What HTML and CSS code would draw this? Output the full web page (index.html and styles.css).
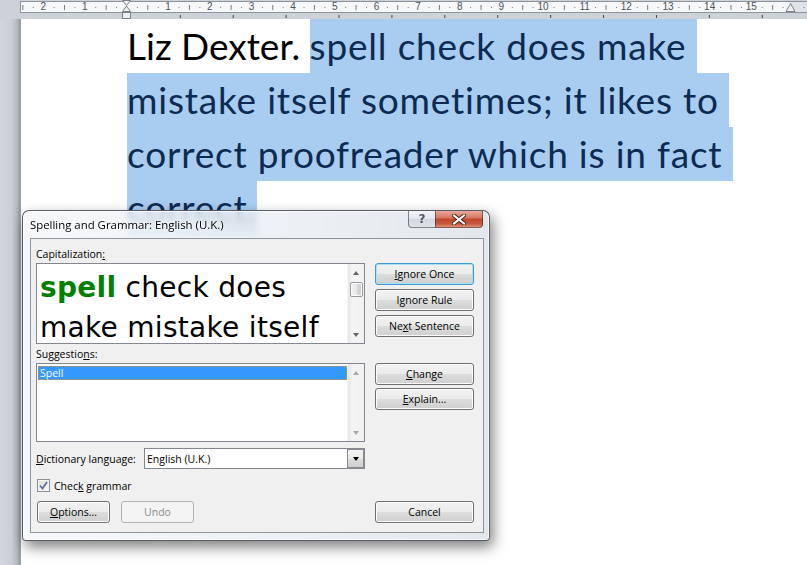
FILE: index.html
```html
<!DOCTYPE html>
<html lang="en">
<head>
  <meta charset="UTF-8" />
  <meta name="viewport" content="width=device-width, initial-scale=1.0"/>
  <title>Spelling and Grammar</title>
  <link rel="stylesheet" href="styles.css">
</head>
<body>
  <div class="ruler-row">
    <div class="ruler">
      <div class="ruler-nums">
        <span>2</span><span>1</span><span></span><span>1</span><span>2</span><span>3</span><span>4</span><span>5</span><span>6</span><span>7</span><span>8</span><span>9</span><span>10</span><span>11</span><span>12</span><span>13</span><span>14</span><span>15</span>
      </div>
    </div>
    <div class="tabstops"></div>
    <svg class="indent-marker" width="11" height="19" viewBox="0 0 11 19">
      <polygon points="1.5,0.5 9.5,0.5 5.5,5.5" />
      <polygon points="5.5,6 9.5,11.5 1.5,11.5" />
      <rect x="1.5" y="12.5" width="8" height="6" />
    </svg>
    <svg class="right-marker" width="11" height="10" viewBox="0 0 11 10">
      <polygon points="5.5,0.5 10,8.5 1,8.5" />
    </svg>
  </div>

  <div class="workspace">
    <div class="gutter"></div>
    <div class="page">
      <div class="doc">
        <div class="line">Liz Dexter. <span class="sel">spell check does make </span></div>
        <div class="line"><span class="sel">mistake itself sometimes; it likes to </span></div>
        <div class="line"><span class="sel">correct proofreader which is in fact </span></div>
        <div class="line"><span class="sel">correct.</span></div>
      </div>
    </div>
  </div>

  <!-- the dialog floats over the document -->
  <div class="dialog">
    <div class="titlebar">
      <div class="title">Spelling and Grammar: English (U.K.)</div>
      <div class="caption-btns">
        <div class="cap help">?</div>
        <div class="cap close">
          <svg width="14" height="11" viewBox="0 0 14 11">
            <path d="M2 1.5 L12 9.5 M12 1.5 L2 9.5" stroke="#4a2019" stroke-width="4" stroke-linecap="square" />
            <path d="M2 1.5 L12 9.5 M12 1.5 L2 9.5" stroke="#fff" stroke-width="2" stroke-linecap="square" />
          </svg>
        </div>
      </div>
    </div>

    <div class="client">
      <div class="label cap-label">Capitalization<u>:</u></div>
      <div class="pane-row">
        <div class="textbox">
          <div class="sentence"><b class="err">spell</b> check does<br>make mistake itself</div>
          <div class="vscroll">
            <span class="arrow up"></span>
            <span class="thumb"></span>
            <span class="arrow down"></span>
          </div>
        </div>
        <div class="btn-col">
          <button class="btn default"><u>I</u>gnore Once</button>
          <button class="btn">I<u>g</u>nore Rule</button>
          <button class="btn">Ne<u>x</u>t Sentence</button>
        </div>
      </div>

      <div class="label sugg-label">Suggestio<u>n</u>s:</div>
      <div class="pane-row">
        <div class="listbox">
          <div class="items">
            <div class="item selected">Spell</div>
          </div>
          <div class="vscroll off">
            <span class="arrow up"></span>
            <span class="arrow down"></span>
          </div>
        </div>
        <div class="btn-col tight">
          <button class="btn"><u>C</u>hange</button>
          <button class="btn"><u>E</u>xplain...</button>
        </div>
      </div>

      <div class="lang-row">
        <span class="lang-label"><u>D</u>ictionary language:</span>
        <div class="combo">
          <span class="combo-text">English (U.K.)</span>
          <span class="combo-btn"><span class="caret"></span></span>
        </div>
      </div>

      <div class="check-row">
        <span class="checkbox">
          <svg width="9" height="9" viewBox="0 0 9 9">
            <path d="M1 4.5 L3.5 7.5 L8 1" fill="none" stroke="#5a70a6" stroke-width="1.8" />
          </svg>
        </span>
        <span>Chec<u>k</u> grammar</span>
      </div>

      <div class="bottom-row">
        <button class="btn small"><u>O</u>ptions...</button>
        <button class="btn small" disabled>Undo</button>
        <button class="btn cancel">Cancel</button>
      </div>
    </div>
  </div>
</body>
</html>
```

FILE: styles.css
```css
body {
  margin: 0;
  width: 807px;
  height: 565px;
  overflow: hidden;
  position: relative;
  background: #cdd2d9;
  font-family: "Open Sans", "Noto Sans", sans-serif;
}

/* ---------- ruler ---------- */
.ruler-row {
  height: 19px;
  position: relative;
  background: #cdd2d9;
}

.ruler {
  margin-left: 20px;
  position: relative;
  top: 1px;
  height: 10px;
  border: 1px solid #8e949b;
  border-right: none;
  background-color: #f6f7f9;
  background-image:
    linear-gradient(to right, #75797f 0 1px, transparent 1px),
    linear-gradient(to right, #75797f 0 1px, transparent 1px),
    linear-gradient(to right, transparent 769px, #dfe2e6 769px);
  background-size: 41.667px 5px, 20.833px 1px, 100% 100%;
  background-position: 1.33px 2.5px, 11.77px 4.5px, 0 0;
  background-repeat: repeat-x, repeat-x, no-repeat;
}

.ruler-nums {
  display: flex;
  padding-left: 1.33px;
}

.ruler-nums span {
  flex: 0 0 41.667px;
  text-align: center;
  font-family: "Liberation Sans", sans-serif;
  font-size: 10px;
  line-height: 10px;
  color: #4f545b;
}

.tabstops {
  position: relative;
  top: 1px;
  margin-left: 128px;
  height: 7px;
  background-image: linear-gradient(to right, #3f4348 0 1px, transparent 1px);
  background-size: 52.92px 3px;
  background-position: 51.8px 2px;
  background-repeat: repeat-x;
}

.indent-marker {
  position: absolute;
  left: 121px;
  top: 0;
}

.right-marker {
  position: absolute;
  left: 785px;
  top: 3px;
}

.indent-marker polygon,
.indent-marker rect,
.right-marker polygon {
  fill: #eef0f2;
  stroke: #7b8087;
  stroke-width: 1;
}

/* ---------- document ---------- */
.workspace {
  display: flex;
  height: 546px;
}

.gutter {
  width: 21px;
  background: linear-gradient(to right, #d2d6dc 0, #ccd0d6 11px, #b4b9c0 17px, #959aa1 20px, #a3a8ae 21px);
}

.page {
  flex: 1;
  background: #fff;
  overflow: hidden;
}

.doc {
  padding-left: 106px;
  font-family: Lato, "Open Sans", sans-serif;
  font-size: 37px;
  color: #000;
}

.line {
  height: 54px;
  line-height: 54px;
  white-space: pre;
}

.sel {
  display: inline-block;
  background: #a8cdf0;
  color: #0d2b52;
  letter-spacing: 0.8px;
}

/* ---------- dialog ---------- */
.dialog {
  position: absolute;
  left: 22px;
  top: 210px;
  width: 468px;
  height: 331px;
  box-sizing: border-box;
  display: flex;
  flex-direction: column;
  border: 1px solid rgba(38, 46, 56, 0.75);
  border-radius: 7px 7px 4px 4px;
  background: linear-gradient(to right, rgba(244, 246, 249, 0.86), rgba(232, 236, 241, 0.8) 60%, rgba(222, 227, 233, 0.85));
  backdrop-filter: blur(3px);
  box-shadow: inset 0 0 0 1px rgba(255, 255, 255, 0.7), 3px 6px 14px rgba(0, 0, 0, 0.5);
  font-size: 10.5px;
  color: #000;
}

.titlebar {
  height: 27px;
  display: flex;
  align-items: flex-start;
}

.title {
  padding: 7px 0 0 7px;
  font-size: 11.4px;
  line-height: 14px;
  text-shadow: 0 0 6px #fff, 0 0 3px #fff;
}

.caption-btns {
  margin-left: auto;
  margin-right: 6px;
  display: flex;
}

.cap {
  height: 17px;
  box-sizing: border-box;
  border: 1px solid rgba(40, 40, 40, 0.55);
  border-top: none;
  display: flex;
  align-items: center;
  justify-content: center;
}

.help {
  width: 27px;
  border-right: none;
  border-radius: 0 0 0 4px;
  background: linear-gradient(#f3f5f8, #e3e7ec 50%, #d3d8df 50%, #dfe3e8);
  font-family: "DejaVu Sans", sans-serif;
  font-weight: bold;
  font-size: 12px;
  color: #505660;
}

.close {
  width: 48px;
  border-radius: 0 0 4px 0;
  background: linear-gradient(#e9a99b, #d7735f 45%, #c2432c 50%, #c85a41 80%, #de8f74);
}

.client {
  flex: 1;
  margin: 0 5px 7px 7px;
  border: 1px solid #8f959c;
  background: #f0f0f0;
  padding: 0 9px 0 5px;
  box-sizing: border-box;
}

.label {
  line-height: 14px;
  box-sizing: border-box;
}

.cap-label {
  height: 24px;
  padding-top: 8px;
}

.sugg-label {
  height: 19px;
  padding-top: 3px;
}

.pane-row {
  display: flex;
  gap: 10px;
}

.textbox,
.listbox {
  width: 329px;
  box-sizing: border-box;
  border: 1px solid #828790;
  background: #fff;
  display: flex;
  overflow: hidden;
}

.textbox {
  height: 81px;
}

.listbox {
  height: 79px;
}

.sentence {
  flex: 1;
  padding: 4px 0 0 3px;
  font-family: "DejaVu Sans", sans-serif;
  font-size: 28px;
  letter-spacing: 0.3px;
  line-height: 40px;
  white-space: nowrap;
  overflow: hidden;
}

.err {
  color: #008000;
}

.items {
  flex: 1;
  padding: 2px 0 0 1px;
}

.item {
  line-height: 14px;
  padding-left: 2px;
}

.item.selected {
  background: #3399ff;
  color: #fff;
  outline: 1px dotted #e0902c;
  outline-offset: -1px;
}

.vscroll {
  width: 17px;
  flex: 0 0 17px;
  display: flex;
  flex-direction: column;
  align-items: center;
  background: linear-gradient(to right, #e6e6e6, #f4f4f4 30%, #f1f1f1);
  border-left: 1px solid #f6f6f6;
  box-sizing: border-box;
}

.arrow {
  width: 0;
  height: 0;
  border-left: 3.5px solid transparent;
  border-right: 3.5px solid transparent;
}

.arrow.up {
  margin-top: 7px;
  border-bottom: 4px solid #606468;
}

.arrow.down {
  margin-top: auto;
  margin-bottom: 6px;
  border-top: 4px solid #606468;
}

.vscroll.off .arrow.up {
  border-bottom-color: #a5a8ab;
}

.vscroll.off .arrow.down {
  border-top-color: #a5a8ab;
}

.thumb {
  margin-top: 7px;
  width: 13px;
  height: 15px;
  box-sizing: border-box;
  border: 1px solid #979a9e;
  border-radius: 2px;
  background: linear-gradient(to right, #f4f4f4, #e8e8e8 50%, #d9d9d9 50%, #cfcfcf);
  box-shadow: inset 0 0 0 1px #fbfbfb;
}

.btn-col {
  display: flex;
  flex-direction: column;
  gap: 4px;
}

.btn-col.tight {
  gap: 3px;
}

.btn {
  width: 99px;
  height: 22px;
  padding: 0;
  box-sizing: border-box;
  border: 1px solid #707070;
  border-radius: 3px;
  background: linear-gradient(#f2f2f2, #ebebeb 50%, #dddddd 50%, #cfcfcf);
  box-shadow: inset 0 0 0 1px #fcfcfc;
  font-family: inherit;
  font-size: 10.5px;
  color: #000;
}

.btn.default {
  border-color: #3c9ad6;
  box-shadow: inset 0 0 0 1px #a6e2fa;
}

.btn.small {
  width: 73px;
}

.btn:disabled {
  border-color: #adb2b5;
  background: #f4f4f4;
  box-shadow: none;
  color: #8a8a8a;
}

.lang-row {
  margin-top: 6px;
  display: flex;
  align-items: center;
  width: 329px;
}

.lang-label {
  flex: 1;
}

.combo {
  width: 221px;
  height: 21px;
  box-sizing: border-box;
  border: 1px solid #828790;
  background: #fff;
  display: flex;
  align-items: center;
}

.combo-text {
  flex: 1;
  padding-left: 2px;
}

.combo-btn {
  width: 17px;
  height: 19px;
  box-sizing: border-box;
  border: 1px solid #8a8a8a;
  background: linear-gradient(#f2f2f2, #ebebeb 50%, #dddddd 50%, #cfcfcf);
  display: flex;
  align-items: center;
  justify-content: center;
}

.caret {
  border-left: 3.5px solid transparent;
  border-right: 3.5px solid transparent;
  border-top: 4px solid #000;
}

.check-row {
  margin-top: 10px;
  display: flex;
  align-items: center;
  gap: 4px;
  height: 13px;
  padding-left: 1px;
}

.checkbox {
  width: 13px;
  height: 13px;
  box-sizing: border-box;
  border: 1px solid #8e8f8f;
  background: linear-gradient(135deg, #dcdcdc, #fbfbfb);
  box-shadow: inset 0 0 0 1px #f4f4f4;
  display: flex;
  align-items: center;
  justify-content: center;
}

.bottom-row {
  margin-top: 9px;
  display: flex;
  gap: 11px;
  padding-left: 1px;
}

.btn.cancel {
  margin-left: auto;
}
```
